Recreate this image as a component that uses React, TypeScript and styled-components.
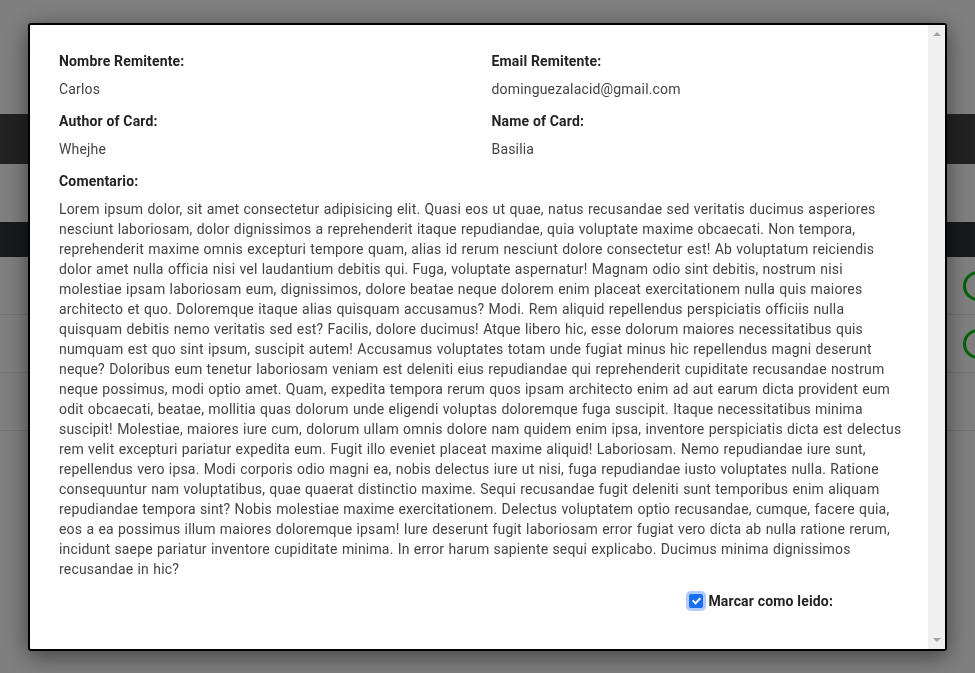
import React, { useState } from "react";
import styled, { createGlobalStyle } from "styled-components";

const GlobalStyle = createGlobalStyle`
  html, body {
    margin: 0;
    padding: 0;
    height: 100%;
    overflow: hidden;
    font-family: Roboto, "Liberation Sans", Arial, sans-serif;
    background: #fff;
  }
`;

const Page = styled.div`
  height: 673px;
  display: flex;
  flex-direction: column;
  background: #fff;
`;

const TopSpace = styled.div`
  height: 114px;
`;

const NavBar = styled.div`
  height: 50px;
  background: #444;
`;

const Toolbar = styled.div`
  height: 58px;
`;

const TableHead = styled.div`
  height: 35px;
  background: #2e3236;
`;

const TableRow = styled.div`
  height: 57px;
  border-bottom: 1px solid #e6e6e6;
  display: flex;
  justify-content: flex-end;
  align-items: center;
`;

const StatusRing = styled.span`
  width: 24px;
  height: 24px;
  border: 3px solid #00c400;
  border-radius: 50%;
  margin-right: -18px;
`;

const Overlay = styled.div`
  position: fixed;
  inset: 0;
  background: rgba(0, 0, 0, 0.5);
  display: flex;
  align-items: center;
  justify-content: center;
`;

const Modal = styled.div`
  width: 919px;
  height: 628px;
  box-sizing: border-box;
  background: #fff;
  border: 2px solid #000;
  border-radius: 3px;
  box-shadow: 0 5px 22px rgba(0, 0, 0, 0.5);
  display: flex;
  overflow: hidden;
`;

const ContentWrap = styled.div`
  flex: 1;
  overflow: hidden;
  padding: 26px 24px 20px 29px;
  color: #444;
  font-size: 14px;
  line-height: 20px;
  letter-spacing: 0.17px;
`;

const InfoGrid = styled.div`
  display: grid;
  grid-template-columns: 1fr 1fr;
  column-gap: 20px;
`;

const Field = styled.div`
  margin-bottom: 12px;
`;

const Label = styled.div`
  font-weight: 700;
  color: #222;
  margin-bottom: 8px;
`;

const Value = styled.div`
  color: #444;
`;

const Comment = styled.p`
  margin: 0;
  color: #444;
  word-spacing: 0.6px;
`;

const CheckRow = styled.label`
  display: flex;
  justify-content: flex-end;
  align-items: center;
  gap: 5px;
  margin-top: 12px;
  padding-right: 71px;
  font-weight: 700;
  color: #222;
`;

const Check = styled.input`
  appearance: none;
  margin: 0;
  width: 14px;
  height: 14px;
  border-radius: 2px;
  background: #1a6ef0;
  box-shadow: 0 0 0 3px rgba(26, 110, 240, 0.35);
  position: relative;
  &::after {
    content: "";
    position: absolute;
    left: 4.5px;
    top: 2px;
    width: 3px;
    height: 6px;
    border: solid #fff;
    border-width: 0 2px 2px 0;
    transform: rotate(45deg);
  }
`;

const FakeScrollbar = styled.div`
  width: 17px;
  background: #f0f0f0;
  display: flex;
  flex-direction: column;
  justify-content: space-between;
  align-items: center;
  padding: 7px 0;
  box-sizing: border-box;
`;

const ScrollArrow = styled.span<{ $down?: boolean }>`
  width: 0;
  height: 0;
  border-left: 4px solid transparent;
  border-right: 4px solid transparent;
  ${(p) => (p.$down ? "border-top: 4px solid #a3a3a3;" : "border-bottom: 4px solid #a3a3a3;")}
`;

const loremText =
  "Lorem ipsum dolor, sit amet consectetur adipisicing elit. Quasi eos ut quae, natus recusandae sed veritatis ducimus asperiores nesciunt laboriosam, dolor dignissimos a reprehenderit itaque repudiandae, quia voluptate maxime obcaecati. Non tempora, reprehenderit maxime omnis excepturi tempore quam, alias id rerum nesciunt dolore consectetur est! Ab voluptatum reiciendis dolor amet nulla officia nisi vel laudantium debitis qui. Fuga, voluptate aspernatur! Magnam odio sint debitis, nostrum nisi molestiae ipsam laboriosam eum, dignissimos, dolore beatae neque dolorem enim placeat exercitationem nulla quis maiores architecto et quo. Doloremque itaque alias quisquam accusamus? Modi. Rem aliquid repellendus perspiciatis officiis nulla quisquam debitis nemo veritatis sed est? Facilis, dolore ducimus! Atque libero hic, esse dolorum maiores necessitatibus quis numquam est quo sint ipsum, suscipit autem! Accusamus voluptates totam unde fugiat minus hic repellendus magni deserunt neque? Doloribus eum tenetur laboriosam veniam est deleniti eius repudiandae qui reprehenderit cupiditate recusandae nostrum neque possimus, modi optio amet. Quam, expedita tempora rerum quos ipsam architecto enim ad aut earum dicta provident eum odit obcaecati, beatae, mollitia quas dolorum unde eligendi voluptas doloremque fuga suscipit. Itaque necessitatibus minima suscipit! Molestiae, maiores iure cum, dolorum ullam omnis dolore nam quidem enim ipsa, inventore perspiciatis dicta est delectus rem velit excepturi pariatur expedita eum. Fugit illo eveniet placeat maxime aliquid! Laboriosam. Nemo repudiandae iure sunt, repellendus vero ipsa. Modi corporis odio magni ea, nobis delectus iure ut nisi, fuga repudiandae iusto voluptates nulla. Ratione consequuntur nam voluptatibus, quae quaerat distinctio maxime. Sequi recusandae fugit deleniti sunt temporibus enim aliquam repudiandae tempora sint? Nobis molestiae maxime exercitationem. Delectus voluptatem optio recusandae, cumque, facere quia, eos a ea possimus illum maiores doloremque ipsam! Iure deserunt fugit laboriosam error fugiat vero dicta ab nulla ratione rerum, incidunt saepe pariatur inventore cupiditate minima. In error harum sapiente sequi explicabo. Ducimus minima dignissimos recusandae in hic?";

const App: React.FC = () => {
  const [leido, setLeido] = useState<boolean>(true);

  return (
    <>
      <GlobalStyle />
      <Page>
        <TopSpace />
        <NavBar />
        <Toolbar />
        <TableHead />
        <TableRow>
          <StatusRing />
        </TableRow>
        <TableRow>
          <StatusRing />
        </TableRow>
        <TableRow />
      </Page>
      <Overlay>
        <Modal>
          <ContentWrap>
            <InfoGrid>
              <Field>
                <Label>Nombre Remitente:</Label>
                <Value>Carlos</Value>
              </Field>
              <Field>
                <Label>Email Remitente:</Label>
                <Value>dominguezalacid@gmail.com</Value>
              </Field>
              <Field>
                <Label>Author of Card:</Label>
                <Value>Whejhe</Value>
              </Field>
              <Field>
                <Label>Name of Card:</Label>
                <Value>Basilia</Value>
              </Field>
            </InfoGrid>
            <Label>Comentario:</Label>
            <Comment>{loremText}</Comment>
            <CheckRow>
              <Check
                type="checkbox"
                checked={leido}
                onChange={() => setLeido(!leido)}
              />
              Marcar como leido:
            </CheckRow>
          </ContentWrap>
          <FakeScrollbar>
            <ScrollArrow />
            <ScrollArrow $down />
          </FakeScrollbar>
        </Modal>
      </Overlay>
    </>
  );
};

export default App;
